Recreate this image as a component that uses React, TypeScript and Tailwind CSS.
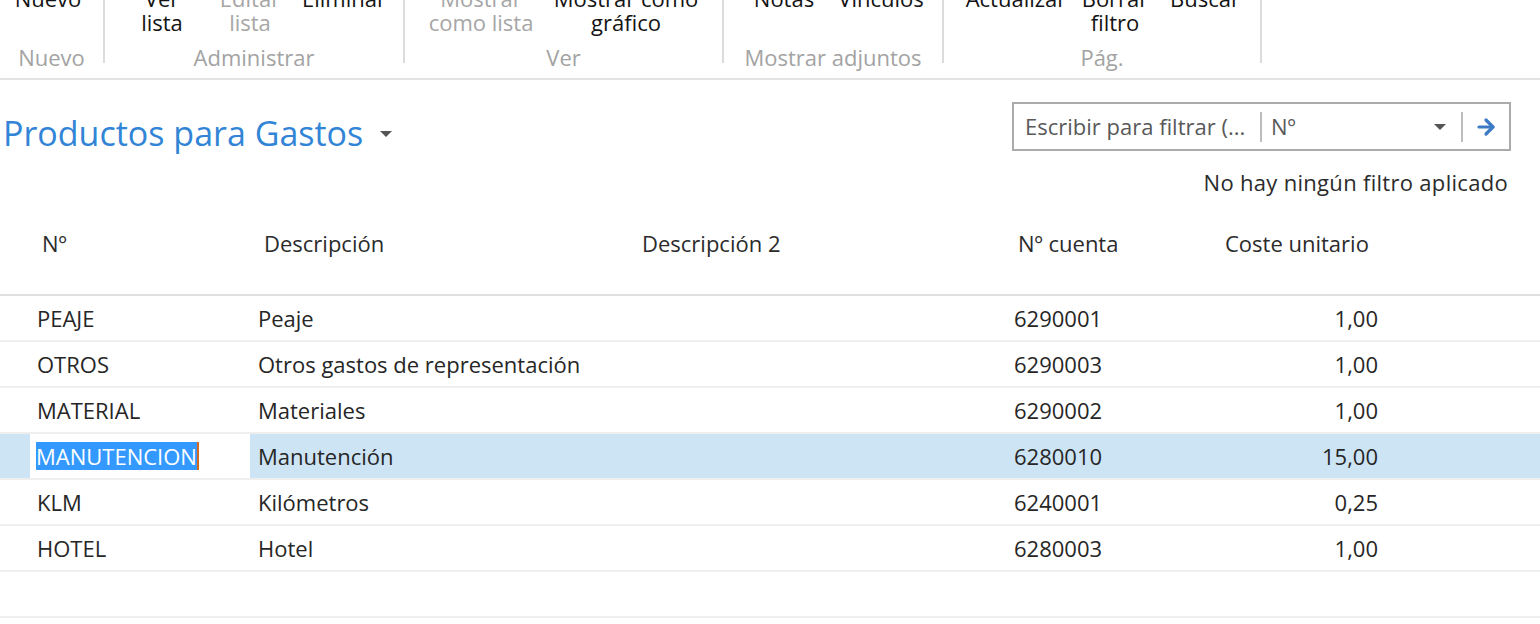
import { ArrowRight } from "lucide-react"

const font = { fontFamily: '"Open Sans", "Noto Sans", sans-serif' }

type Btn = { lines: string[]; w: number; off?: boolean }

const groups: { label: string; w: number; pl: number; btns: Btn[] }[] = [
    { label: "Nuevo", w: 103, pl: 0, btns: [{ lines: ["Nuevo", ""], w: 96 }] },
    {
        label: "Administrar", w: 298, pl: 13, btns: [
            { lines: ["Ver", "lista"], w: 88 },
            { lines: ["Editar", "lista"], w: 88, off: true },
            { lines: ["Eliminar", ""], w: 100 },
        ]
    },
    {
        label: "Ver", w: 317, pl: 11, btns: [
            { lines: ["Mostrar", "como lista"], w: 130, off: true },
            { lines: ["Mostrar como", "gráfico"], w: 160 },
        ]
    },
    {
        label: "Mostrar adjuntos", w: 218, pl: 15, btns: [
            { lines: ["Notas", ""], w: 90 },
            { lines: ["Vínculos", ""], w: 104 },
        ]
    },
    {
        label: "Pág.", w: 316, pl: 12, btns: [
            { lines: ["Actualizar", ""], w: 120 },
            { lines: ["Borrar", "filtro"], w: 78 },
            { lines: ["Buscar", ""], w: 102 },
        ]
    },
]

const rows = [
    { no: "PEAJE", desc: "Peaje", cta: "6290001", cost: "1,00" },
    { no: "OTROS", desc: "Otros gastos de representación", cta: "6290003", cost: "1,00" },
    { no: "MATERIAL", desc: "Materiales", cta: "6290002", cost: "1,00" },
    { no: "MANUTENCION", desc: "Manutención", cta: "6280010", cost: "15,00", sel: true },
    { no: "KLM", desc: "Kilómetros", cta: "6240001", cost: "0,25" },
    { no: "HOTEL", desc: "Hotel", cta: "6280003", cost: "1,00" },
    { no: "", desc: "", cta: "", cost: "" },
]

const Ribbon = () => (
    <div className="h-[80px] overflow-hidden border-b-2 border-[#e3e3e3]">
        <div className="flex -mt-[14px]">
            {groups.map((g, i) => (
                <div key={i} className="flex">
                    <div className="flex flex-col" style={{ width: g.w }}>
                        <div className="flex" style={{ paddingLeft: g.pl }}>
                            {g.btns.map((b, j) => (
                                <div key={j} className={`flex flex-col items-center whitespace-nowrap text-[22px] leading-[24px] ${b.off ? "text-[#a6a6a6]" : "text-[#141414]"}`} style={{ width: b.w }}>
                                    <span className="h-[24px]">{b.lines[0]}</span>
                                    <span className="h-[24px]">{b.lines[1]}</span>
                                </div>
                            ))}
                        </div>
                        <div className="mt-[11px] self-center text-[22px] leading-[24px] text-[#a3a3a3] whitespace-nowrap">{g.label}</div>
                    </div>
                    <div className="w-[2px] h-[77px] bg-[#dcdcdc]" />
                </div>
            ))}
        </div>
    </div>
)

const App = () => {
    return (
        <div className="w-[1540px] h-[624px] bg-white overflow-hidden" style={font}>
            <Ribbon />
            <div className="flex items-start justify-between pl-[3px] pr-[29px] mt-[22px]">
                <div className="flex items-center mt-[9px]">
                    <span className="text-[34px] leading-[44px] text-[#3285d6]">Productos para Gastos</span>
                    <span className="ml-[17px] mt-[2px] w-0 h-0 border-l-[6px] border-r-[6px] border-t-[6px] border-l-transparent border-r-transparent border-t-[#555]" />
                </div>
                <div className="flex flex-col items-end">
                    <div className="w-[499px] h-[49px] border-2 border-[#ababab] flex items-center text-[22px]">
                        <span className="pl-[11px] w-[246px] whitespace-nowrap text-[#595959]">Escribir para filtrar (...</span>
                        <span className="w-[2px] h-[30px] bg-[#bdbdbd]" />
                        <span className="pl-[9px] flex-1 text-[#595959]">Nº</span>
                        <span className="w-0 h-0 mr-[15px] border-l-[6px] border-r-[6px] border-t-[6px] border-l-transparent border-r-transparent border-t-[#555]" />
                        <span className="w-[2px] h-[30px] bg-[#bdbdbd]" />
                        <span className="w-[46px] flex justify-center">
                            <ArrowRight size={24} strokeWidth={3.2} color="#3d7cc4" />
                        </span>
                    </div>
                    <div className="mt-[19px] mr-[3px] text-[22px] leading-[24px] text-[#2b2b2b] whitespace-nowrap tracking-[0.3px]">No hay ningún filtro aplicado</div>
                </div>
            </div>

            <div className="mt-[37px] h-[65px] border-b-2 border-[#e0e0e0] flex text-[22px] leading-[24px] text-[#2b2b2b]">
                <div className="w-[264px] pl-[42px]">Nº</div>
                <div className="w-[378px]">Descripción</div>
                <div className="w-[376px]">Descripción 2</div>
                <div className="w-[207px]">Nº cuenta</div>
                <div className="w-[150px] whitespace-nowrap">Coste unitario</div>
            </div>

            {rows.map((r, i) => (
                <div key={i} className={`h-[46px] border-b-2 border-[#efefef] flex items-center text-[22px] leading-[28px] text-[#262626] ${r.sel ? "bg-[#cde4f5]" : ""}`}>
                    <div className="w-[30px] self-stretch" />
                    <div className={`w-[220px] self-stretch flex items-center ${r.sel ? "bg-white" : ""}`}>
                        {r.sel ? (
                            <span className="ml-[6px] h-[28px] flex items-center bg-[#3399ff] text-white border-r-2 border-[#d2691e]">{r.no}</span>
                        ) : (
                            <span className="ml-[7px]">{r.no}</span>
                        )}
                    </div>
                    <div className="w-[764px] pl-[8px] whitespace-nowrap">{r.desc}</div>
                    <div className="w-[220px]">{r.cta}</div>
                    <div className="w-[144px] text-right">{r.cost}</div>
                </div>
            ))}
        </div>
    )
}

export default App
